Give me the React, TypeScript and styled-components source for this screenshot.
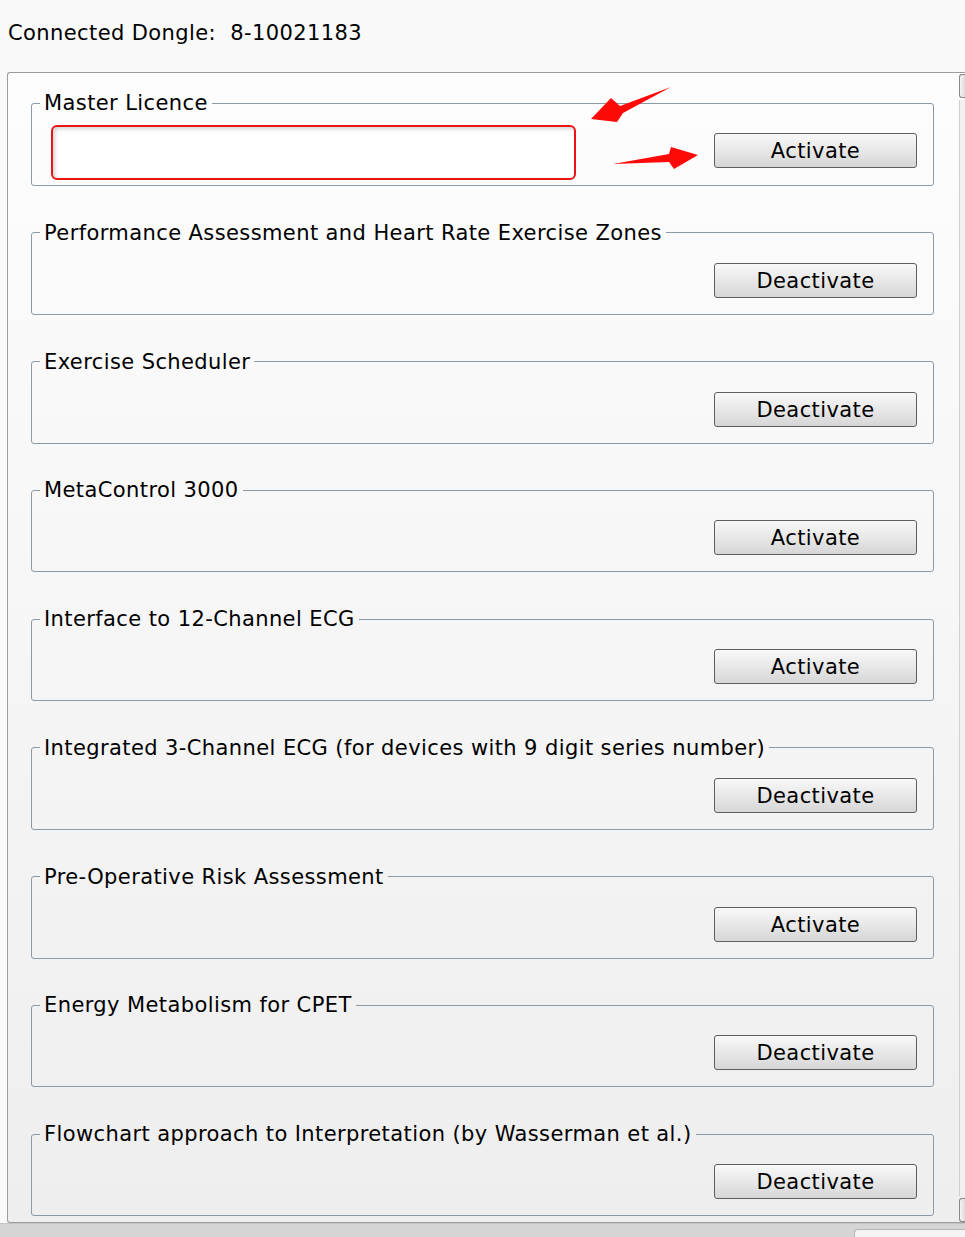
import React from "react";
import styled, { createGlobalStyle } from "styled-components";

const Global = createGlobalStyle`
  html, body { margin: 0; padding: 0; }
  body {
    width: 965px;
    height: 1237px;
    overflow: hidden;
    background: #f9f9f9;
    font-family: "DejaVu Sans", Verdana, sans-serif;
    color: #000;
  }
`;

const Page = styled.div`
  width: 965px;
  height: 1237px;
  display: flex;
  flex-direction: column;
  overflow: hidden;
`;

const Header = styled.div`
  height: 72px;
  box-sizing: border-box;
  padding: 20px 0 0 8px;
  font-size: 21px;
  letter-spacing: 0.4px;
  line-height: 26px;
  white-space: pre;
`;

const Panel = styled.div`
  margin-left: 7px;
  height: 1151px;
  box-sizing: border-box;
  border: 1px solid #9c9c9c;
  border-right: none;
  border-radius: 3px 0 0 3px;
  background: linear-gradient(#fdfdfd, #eeeeee);
  display: flex;
  overflow: hidden;
`;

const Content = styled.div`
  flex: 1;
  padding: 18px 25px 0 23px;
  display: flex;
  flex-direction: column;
  gap: 34.75px;
`;

const ScrollStrip = styled.div`
  width: 6px;
  display: flex;
  flex-direction: column;
  padding-top: 1px;
  gap: 2px;
`;

const ScrollButton = styled.div`
  height: 22px;
  border: 1px solid #8a8a8a;
  border-right: none;
  border-radius: 3px 0 0 3px;
  background: linear-gradient(90deg, #f4f4f4, #dcdcdc);
`;

const ScrollTrack = styled.div`
  flex: 1;
  border-left: 1px solid #d0d0d0;
  background: #f0f0f0;
`;

const Group = styled.fieldset<{ $master?: boolean }>`
  margin: 0;
  min-width: 0;
  border: 1px solid #8c9aa8;
  border-radius: 3px;
  padding: ${(p) => (p.$master ? "10px 16px 5px 8px" : "18px 16px 16px 8px")};
`;

const Legend = styled.legend`
  padding: 0 4px;
  font-size: 21px;
  letter-spacing: 0.4px;
  line-height: 24px;
  white-space: pre;
`;

const Row = styled.div<{ $master?: boolean }>`
  position: relative;
  display: flex;
  justify-content: ${(p) => (p.$master ? "space-between" : "flex-end")};
  align-items: flex-start;
`;

const LicenceInput = styled.input`
  margin-left: 11px;
  width: 525px;
  height: 55px;
  box-sizing: border-box;
  border: 2px solid #ec1313;
  border-radius: 6px;
  background: #fff;
  box-shadow: inset 2px 2px 4px rgba(0, 0, 0, 0.18);
  outline: none;
  font: inherit;
`;

const Button = styled.button<{ $master?: boolean }>`
  width: 203px;
  height: 35px;
  margin-top: ${(p) => (p.$master ? "8px" : "0")};
  box-sizing: border-box;
  border: 1px solid #5e5e5e;
  border-radius: 3px;
  background: linear-gradient(#f8f8f8, #e6e6e6 55%, #d6d6d6);
  font-family: "DejaVu Sans", Verdana, sans-serif;
  font-size: 21px;
  letter-spacing: 0.4px;
  line-height: 24px;
  color: #000;
  padding: 1px 0 0;
`;

const Arrows = styled.svg`
  position: absolute;
  left: 0;
  top: 0;
  overflow: visible;
  pointer-events: none;
`;

const BottomBand = styled.div`
  flex: 1;
  background: #d5d5d5;
  border-top: 1px solid #c4c4c4;
  display: flex;
  justify-content: flex-end;
  align-items: flex-end;
`;

const BottomBox = styled.div`
  width: 110px;
  height: 7px;
  border: 1px solid #b5b5b5;
  border-bottom: none;
  border-right: none;
  border-radius: 4px 0 0 0;
  background: #f4f4f4;
`;

const modules: { name: string; action: string }[] = [
  { name: "Performance Assessment and Heart Rate Exercise Zones", action: "Deactivate" },
  { name: "Exercise Scheduler", action: "Deactivate" },
  { name: "MetaControl 3000", action: "Activate" },
  { name: "Interface to 12-Channel ECG", action: "Activate" },
  { name: "Integrated 3-Channel ECG (for devices with 9 digit series number)", action: "Deactivate" },
  { name: "Pre-Operative Risk Assessment", action: "Activate" },
  { name: "Energy Metabolism for CPET", action: "Deactivate" },
  { name: "Flowchart approach to Interpretation (by Wasserman et al.)", action: "Deactivate" },
];

export default function App() {
  return (
    <Page>
      <Global />
      <Header>{"Connected Dongle:  8-10021183"}</Header>
      <Panel>
        <Content>
          <Group $master>
            <Legend>Master Licence</Legend>
            <Row $master>
              <LicenceInput />
              <Button $master>Activate</Button>
              <Arrows width="1" height="1">
                <polygon
                  fill="#ff0808"
                  points="631,-38 580,-19 571,-27 551,-6 577,-3 583,-12"
                />
                <polygon
                  fill="#ff0808"
                  points="573,39 629,29 631,22 658,30 634,44 629,37"
                />
              </Arrows>
            </Row>
          </Group>
          {modules.map((m) => (
            <Group key={m.name}>
              <Legend>{m.name}</Legend>
              <Row>
                <Button>{m.action}</Button>
              </Row>
            </Group>
          ))}
        </Content>
        <ScrollStrip>
          <ScrollButton />
          <ScrollTrack />
          <ScrollButton />
        </ScrollStrip>
      </Panel>
      <BottomBand>
        <BottomBox />
      </BottomBand>
    </Page>
  );
}
